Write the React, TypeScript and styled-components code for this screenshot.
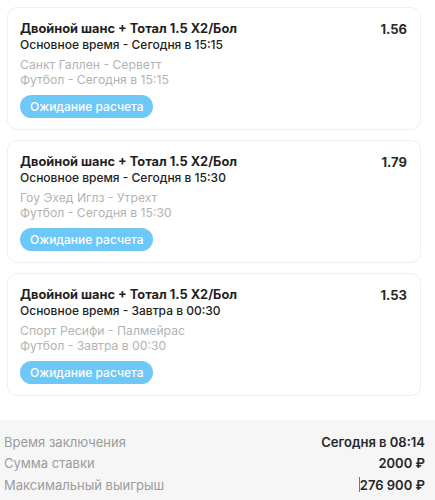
import React from "react";
import styled, { createGlobalStyle } from "styled-components";

const Global = createGlobalStyle`
  html, body { margin: 0; padding: 0; background: #fff; }
  body { font-family: Inter, "Noto Sans", sans-serif; -webkit-font-smoothing: antialiased; }
`;

const Page = styled.div`
  width: 435px;
  display: flex;
  flex-direction: column;
`;

const List = styled.div`
  display: flex;
  flex-direction: column;
  gap: 10px;
  padding: 7px 14px 0 7px;
`;

const Card = styled.div`
  border: 1px solid #efefef;
  border-radius: 10px;
  padding: 13px 13px 11px 12px;
  display: flex;
  flex-direction: column;
  background: #fff;
`;

const TopRow = styled.div`
  display: flex;
  justify-content: space-between;
  align-items: center;
  height: 16px;
`;

const Title = styled.div`
  font-size: 12.8px;
  font-weight: 700;
  color: #1f1f1f;
  line-height: 16px;
`;

const Odds = styled.div`
  font-size: 13px;
  font-weight: 700;
  color: #2a2a2a;
  line-height: 16px;
`;

const Sub = styled.div`
  font-size: 12px;
  font-weight: 500;
  color: #222;
  line-height: 15px;
  height: 15px;
`;

const Muted = styled.div<{ $first?: boolean }>`
  font-size: 12.2px;
  color: #b3b3b3;
  line-height: 15px;
  height: 15px;
  margin-top: ${(p) => (p.$first ? "5px" : "0")};
`;

const Status = styled.div`
  align-self: flex-start;
  margin-top: 8px;
  height: 23px;
  padding: 0 9px 0 10px;
  border-radius: 12px;
  background: #6ec8f7;
  color: #fff;
  font-size: 12px;
  font-weight: 500;
  display: flex;
  align-items: center;
`;

const Footer = styled.div`
  margin-top: 24px;
  background: #f6f6f6;
  padding: 11px 10px 8px 4px;
  display: flex;
  flex-direction: column;
`;

const Row = styled.div`
  display: flex;
  justify-content: space-between;
  align-items: center;
  height: 21.5px;
  font-size: 13px;
`;

const Label = styled.span`
  color: #9c9c9c;
`;

const Value = styled.span`
  color: #262626;
  font-weight: 600;
  position: relative;
`;

const Caret = styled.span`
  position: absolute;
  left: -1px;
  top: 0px;
  width: 1px;
  height: 15px;
  background: #777;
`;

const bets = [
  {
    odds: "1.56",
    time: "Основное время - Сегодня в 15:15",
    teams: "Санкт Галлен - Серветт",
    sport: "Футбол - Сегодня в 15:15",
  },
  {
    odds: "1.79",
    time: "Основное время - Сегодня в 15:30",
    teams: "Гоу Эхед Иглз - Утрехт",
    sport: "Футбол - Сегодня в 15:30",
  },
  {
    odds: "1.53",
    time: "Основное время - Завтра в 00:30",
    teams: "Спорт Ресифи - Палмейрас",
    sport: "Футбол - Завтра в 00:30",
  },
];

export default function App() {
  return (
    <Page>
      <Global />
      <List>
        {bets.map((b, i) => (
          <Card key={i}>
            <TopRow>
              <Title>Двойной шанс + Тотал 1.5 X2/Бол</Title>
              <Odds>{b.odds}</Odds>
            </TopRow>
            <Sub>{b.time}</Sub>
            <Muted $first>{b.teams}</Muted>
            <Muted>{b.sport}</Muted>
            <Status>Ожидание расчета</Status>
          </Card>
        ))}
      </List>
      <Footer>
        <Row>
          <Label>Время заключения</Label>
          <Value>Сегодня в 08:14</Value>
        </Row>
        <Row>
          <Label>Сумма ставки</Label>
          <Value>2000 ₽</Value>
        </Row>
        <Row>
          <Label>Максимальный выигрыш</Label>
          <Value>
            <Caret />
            276 900 ₽
          </Value>
        </Row>
      </Footer>
    </Page>
  );
}
